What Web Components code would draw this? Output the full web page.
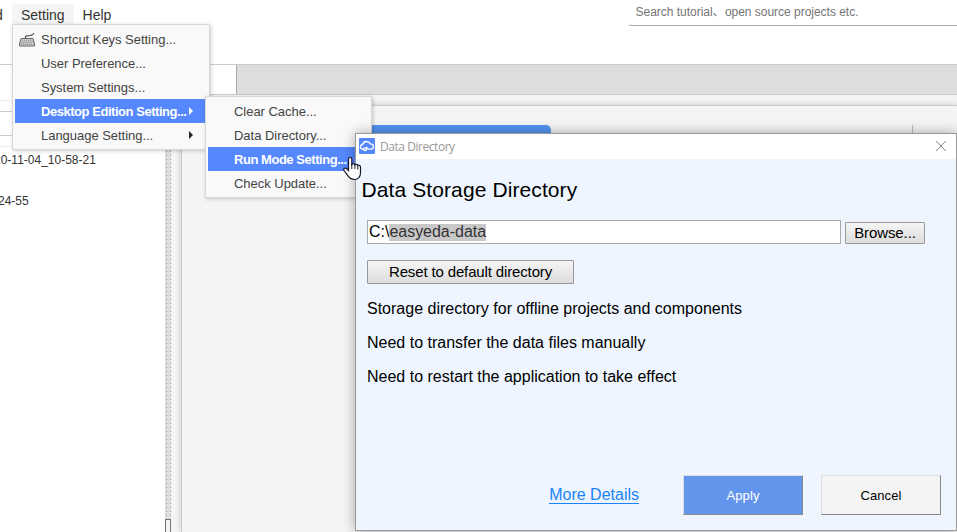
<!DOCTYPE html>
<html>
<head>
	<meta charset="utf-8">
	<title>Data Directory</title>
	<style type="text/css">
		html, body{
			margin: 0;
			height: 100%;
			overflow: hidden;
			background: #fff;
			font-family: "Liberation Sans", Arial, sans-serif;
		}
		#main-menu{ left: 12px; top: 24px; width: 196px; height: 124px; }
		#sub-menu{ left: 205px; top: 96px; width: 165px; height: 100px; }
	</style>
</head>
<body>

	<template id="tpl-shell">
		<style>
			:host{ display: flex; flex-direction: column; height: 532px; overflow: hidden; color: #333; }
			header{ display: flex; justify-content: space-between; height: 64px; }
			nav{ display: flex; padding-top: 4px; font-size: 14px; line-height: 22px; }
			nav span{ height: 21px; border-radius: 3px 3px 0 0; padding: 0 9px; }
			nav span:first-child{ padding: 0; width: 12px; text-indent: -5px; }
			nav .open{ background: #f5f5f5; }
			.search{ box-sizing: border-box; width: 329px; height: 26px; border-bottom: 1px solid #aaa; border-left: 1px solid transparent; border-radius: 0 0 0 3px; padding-left: 6.5px; font-size: 12px; line-height: 24px; color: #757575; white-space: pre; letter-spacing: -.02px; }
			.search i{ display: inline-block; width: 12.3px; font-style: normal; font-family: "Noto Sans CJK SC", sans-serif; line-height: 12px; }
			.work{ flex: 1; display: grid; grid-template-columns: 165px 6px 1fr; border-top: 1px solid #ccc; }
			aside{ overflow: hidden; font-size: 12px; }
			aside hr{ margin: 0; border: 0; height: 1px; background: #ccc; }
			aside hr.soft{ background: #eee; }
			aside p{ margin: 0; line-height: 14px; }
			.split{ display: flex; align-items: flex-end; background:
				repeating-linear-gradient(transparent 0 2px, #999 2px 3px, #eee 3px 4px) 1px 0 / 1px 100% no-repeat,
				repeating-linear-gradient(transparent 0 2px, #999 2px 3px, #eee 3px 4px) 5px 0 / 1px 100% no-repeat,
				#ddd; }
			.split b{ box-sizing: border-box; width: 6px; height: 13px; border: 1px solid #766f6f; border-bottom: 0; background: #f4f4f4; }
			.editor{ display: flex; flex-direction: column; min-width: 0; background: #f4f4f4; }
			.tabs{ display: flex; height: 29px; background: #ddd; border-bottom: 1px solid #ccc; }
			.tabs b{ width: 65px; background: #fff; border-right: 1px solid #aaa; }
			.canvas{ flex: 1; margin: 10px 0 0 10px; border-top: 1px solid #ccc; border-left: 1px solid #ccc; box-shadow: 0 0 6px rgba(0,0,0,.2); background: #f4f4f4; display: flex; justify-content: space-between; align-items: flex-start; padding: 19px 44px 0 138px; }
			.banner{ width: 231px; height: 30px; background: #5496f2; border-radius: 0 5px 0 0; }
			.canvas i{ width: 1px; height: 12px; background: #bbb; }
		</style>
		<header>
			<nav><span>d</span><span class="open">Setting</span><span>Help</span></nav>
			<div class="search">Search tutorial<i>、</i>open source projects etc.</div>
		</header>
		<div class="work">
			<aside>
				<hr class="soft" style="margin-top:35px">
				<hr style="margin-top:10px">
				<hr style="margin-top:23px">
				<hr class="soft" style="margin-top:10px">
				<p style="margin:6px 0 0 -6px">20-11-04_10-58-21</p>
				<p style="margin:27px 0 0 -2px">24-55</p>
			</aside>
			<div class="split"><b></b></div>
			<div class="editor">
				<div class="tabs"><b></b></div>
				<div class="canvas"><div class="banner"></div><i></i></div>
			</div>
		</div>
	</template>

	<template id="tpl-menu">
		<style>
			:host{ position: absolute; display: block; border: 1px solid #d8d8d8; background: #f9f9f9; box-shadow: 1px 1px 4px rgba(0,0,0,.2); }
			div{ padding: 2px 2px 1px; }
		</style>
		<div><slot></slot></div>
	</template>

	<template id="tpl-item">
		<style>
			:host{ display: flex; align-items: center; height: 24px; box-sizing: border-box; padding: 0 14px 0 4px; font-size: 13px; color: #444; white-space: nowrap; letter-spacing: -.03px; }
			:host([active]){ background: #5588ff; color: #fff; font-weight: bold; letter-spacing: -.46px; }
			.icon{ width: 22px; height: 16px; }
			.label{ flex: 1; }
			.arrow{ display: none; border: 4px solid transparent; border-left: 4px solid #222; border-right: 0; }
			:host([more]) .arrow{ display: block; }
			:host([active]) .arrow{ border-left-color: #fff; }
		</style>
		<span class="icon"><slot name="icon"></slot></span>
		<span class="label"><slot></slot></span>
		<span class="arrow"></span>
	</template>

	<template id="tpl-button">
		<style>
			:host{ display: flex; align-items: center; justify-content: center; box-sizing: border-box; border: 1px solid #999; background: linear-gradient(#f5f5f5, #dcdcdc); color: #000; font-size: 15px; border-radius: 1px; padding-bottom: 2px; }
			:host([flat]){ width: 120px; height: 40px; border-color: #ddd #888 #888 #ddd; background: #f4f4f4; border-radius: 0; font-size: 13px; letter-spacing: .12px; padding-bottom: 0; }
			:host([primary]){ background: #6495ed; color: #fff; }
		</style>
		<slot></slot>
	</template>

	<template id="tpl-dialog">
		<style>
			:host{ position: absolute; left: 355px; top: 133px; width: 602px; height: 398px; box-sizing: border-box; border: 1px solid #999; background: #eef5ff; box-shadow: 0 0 12px rgba(0,0,0,.32); display: flex; flex-direction: column; color: #000; font-size: 16px; }
			.title{ box-sizing: border-box; display: flex; align-items: center; height: 25px; background: #fff; color: #999; font: 12px "Open Sans", "Noto Sans", sans-serif; padding: 0 9px 1px 3px; }
			.title span{ flex: 1; padding-left: 5px; letter-spacing: -.45px; }
			h1{ margin: 16px 0 0 5.5px; font-size: 21px; font-weight: normal; line-height: 30px; letter-spacing: .1px; }
			.row{ display: flex; align-items: flex-end; gap: 4px; margin: 15px 0 0 11px; }
			.path{ box-sizing: border-box; width: 474px; height: 24px; border: 1px solid #aaa; background: #fff; padding-left: 1px; line-height: 21px; letter-spacing: -.02px; }
			.path mark{ background: #c8c8c8; color: #333; display: inline-block; height: 17px; line-height: 16px; }
			.browse{ width: 80px; height: 22px; letter-spacing: -.1px; }
			.reset{ width: 207px; height: 24px; margin: 16px 0 0 11px; letter-spacing: -.14px; }
			.notes{ padding: 8px 0 0 11px; line-height: 34px; flex: 1; }
			footer{ display: flex; align-items: center; justify-content: flex-end; gap: 18px; padding: 0 15px 15px 0; }
			a{ color: #1a83f5; line-height: 17px; border-bottom: 1px solid #1a83f5; margin-right: 26px; }
		</style>
		<div class="title">
			<svg width="16" height="16" viewBox="0 0 16 16"><rect width="16" height="16" rx="1" fill="#5588ff"/><path d="M4.6 11.2H3.7C1.9 11 1.2 9.8 1.4 8.5c.2-1.2 1.1-1.9 2.2-2C4.2 4.5 5.7 3.5 7.5 3.5c1.7 0 3 .8 3.7 2.3 2 0 3.3 1 3.3 2.7 0 1.6-1.2 2.6-2.8 2.6H9.2L7.6 9.6M7.5 11.3a1.4 1.4 0 1 1-2.8 0 1.4 1.4 0 0 1 2.8 0ZM7.2 10.3l1.2-1.1" fill="none" stroke="#fff" stroke-width="1.3"/></svg>
			<span>Data Directory</span>
			<svg width="12" height="12" viewBox="0 0 12 12"><path d="M1 1l10 10M11 1L1 11" stroke="#888" fill="none"/></svg>
		</div>
		<h1>Data Storage Directory</h1>
		<div class="row">
			<div class="path">C:\<mark>easyeda-data</mark></div>
			<push-button class="browse">Browse...</push-button>
		</div>
		<push-button class="reset">Reset to default directory</push-button>
		<div class="notes"><slot></slot></div>
		<footer>
			<a>More Details</a>
			<push-button flat primary>Apply</push-button>
			<push-button flat>Cancel</push-button>
		</footer>
	</template>

	<template id="tpl-pointer">
		<style>
			:host{ position: absolute; left: 343px; top: 156px; display: block; width: 19px; height: 25px; }
			svg{ display: block; }
		</style>
		<svg width="19" height="25" viewBox="0 0 19 25"><path d="M5.5 14.5V3.3C5.5.9 8.8.9 8.8 3.3V8.4C9.6 7.3 11.5 7.6 11.9 8.9c1-.9 2.6-.5 2.9.6 1.1-.7 2.7.1 2.7 1.5v5.5c0 4.2-2.4 7-6 7-4.1 0-5.6-2.1-7.2-4.6L1 14.5c-1-2 1.3-3.1 2.5-2Z" fill="#fff" stroke="#151525" stroke-width="1.2"/><path d="M8.8 8v5M11.9 9v4M14.8 10v3.5" stroke="#151525" fill="none"/></svg>
	</template>

	<app-shell></app-shell>

	<drop-menu id="main-menu">
		<menu-row>
			<svg slot="icon" width="16" height="16" viewBox="0 0 16 16"><path d="M6.5 7V5.5C7 4.5 9 5 11 4.5S14.5 4 14.8 2" fill="none" stroke="#555" stroke-width="1.2"/><path d="M2 7.5h12l1.5 5.5v2H.5v-2Z" fill="#d5d5d5" stroke="#666"/><path d="M3 9.2h10.5M2.3 11.2h11.7M2 13.2h12.5" stroke="#777" stroke-dasharray="1.2 .8"/></svg>
			Shortcut Keys Setting...
		</menu-row>
		<menu-row>User Preference...</menu-row>
		<menu-row>System Settings...</menu-row>
		<menu-row active more>Desktop Edition Setting...</menu-row>
		<menu-row more>Language Setting...</menu-row>
	</drop-menu>

	<drop-menu id="sub-menu">
		<menu-row>Clear Cache...</menu-row>
		<menu-row>Data Directory...</menu-row>
		<menu-row active>Run Mode Setting...</menu-row>
		<menu-row>Check Update...</menu-row>
	</drop-menu>

	<data-dialog>
		<div>Storage directory for offline projects and components</div>
		<div>Need to transfer the data files manually</div>
		<div>Need to restart the application to take effect</div>
	</data-dialog>

	<hand-pointer></hand-pointer>

	<script type="text/javascript">

		//every element clones its own template into the shadow root
		class TplElement extends HTMLElement{
			constructor(){
				super();
				const tpl = document.getElementById(this.constructor.tpl);
				this.attachShadow({mode:'open'});
				this.shadowRoot.appendChild(tpl.content.cloneNode(true));
			}
		}

		class AppShell extends TplElement{ static tpl = 'tpl-shell'; }
		class DropMenu extends TplElement{ static tpl = 'tpl-menu'; }
		class MenuRow extends TplElement{ static tpl = 'tpl-item'; }
		class PushButton extends TplElement{ static tpl = 'tpl-button'; }
		class DataDialog extends TplElement{ static tpl = 'tpl-dialog'; }
		class HandPointer extends TplElement{ static tpl = 'tpl-pointer'; }

		customElements.define('app-shell',AppShell);
		customElements.define('drop-menu',DropMenu);
		customElements.define('menu-row',MenuRow);
		customElements.define('push-button',PushButton);
		customElements.define('data-dialog',DataDialog);
		customElements.define('hand-pointer',HandPointer);

	</script>

</body>
</html>
